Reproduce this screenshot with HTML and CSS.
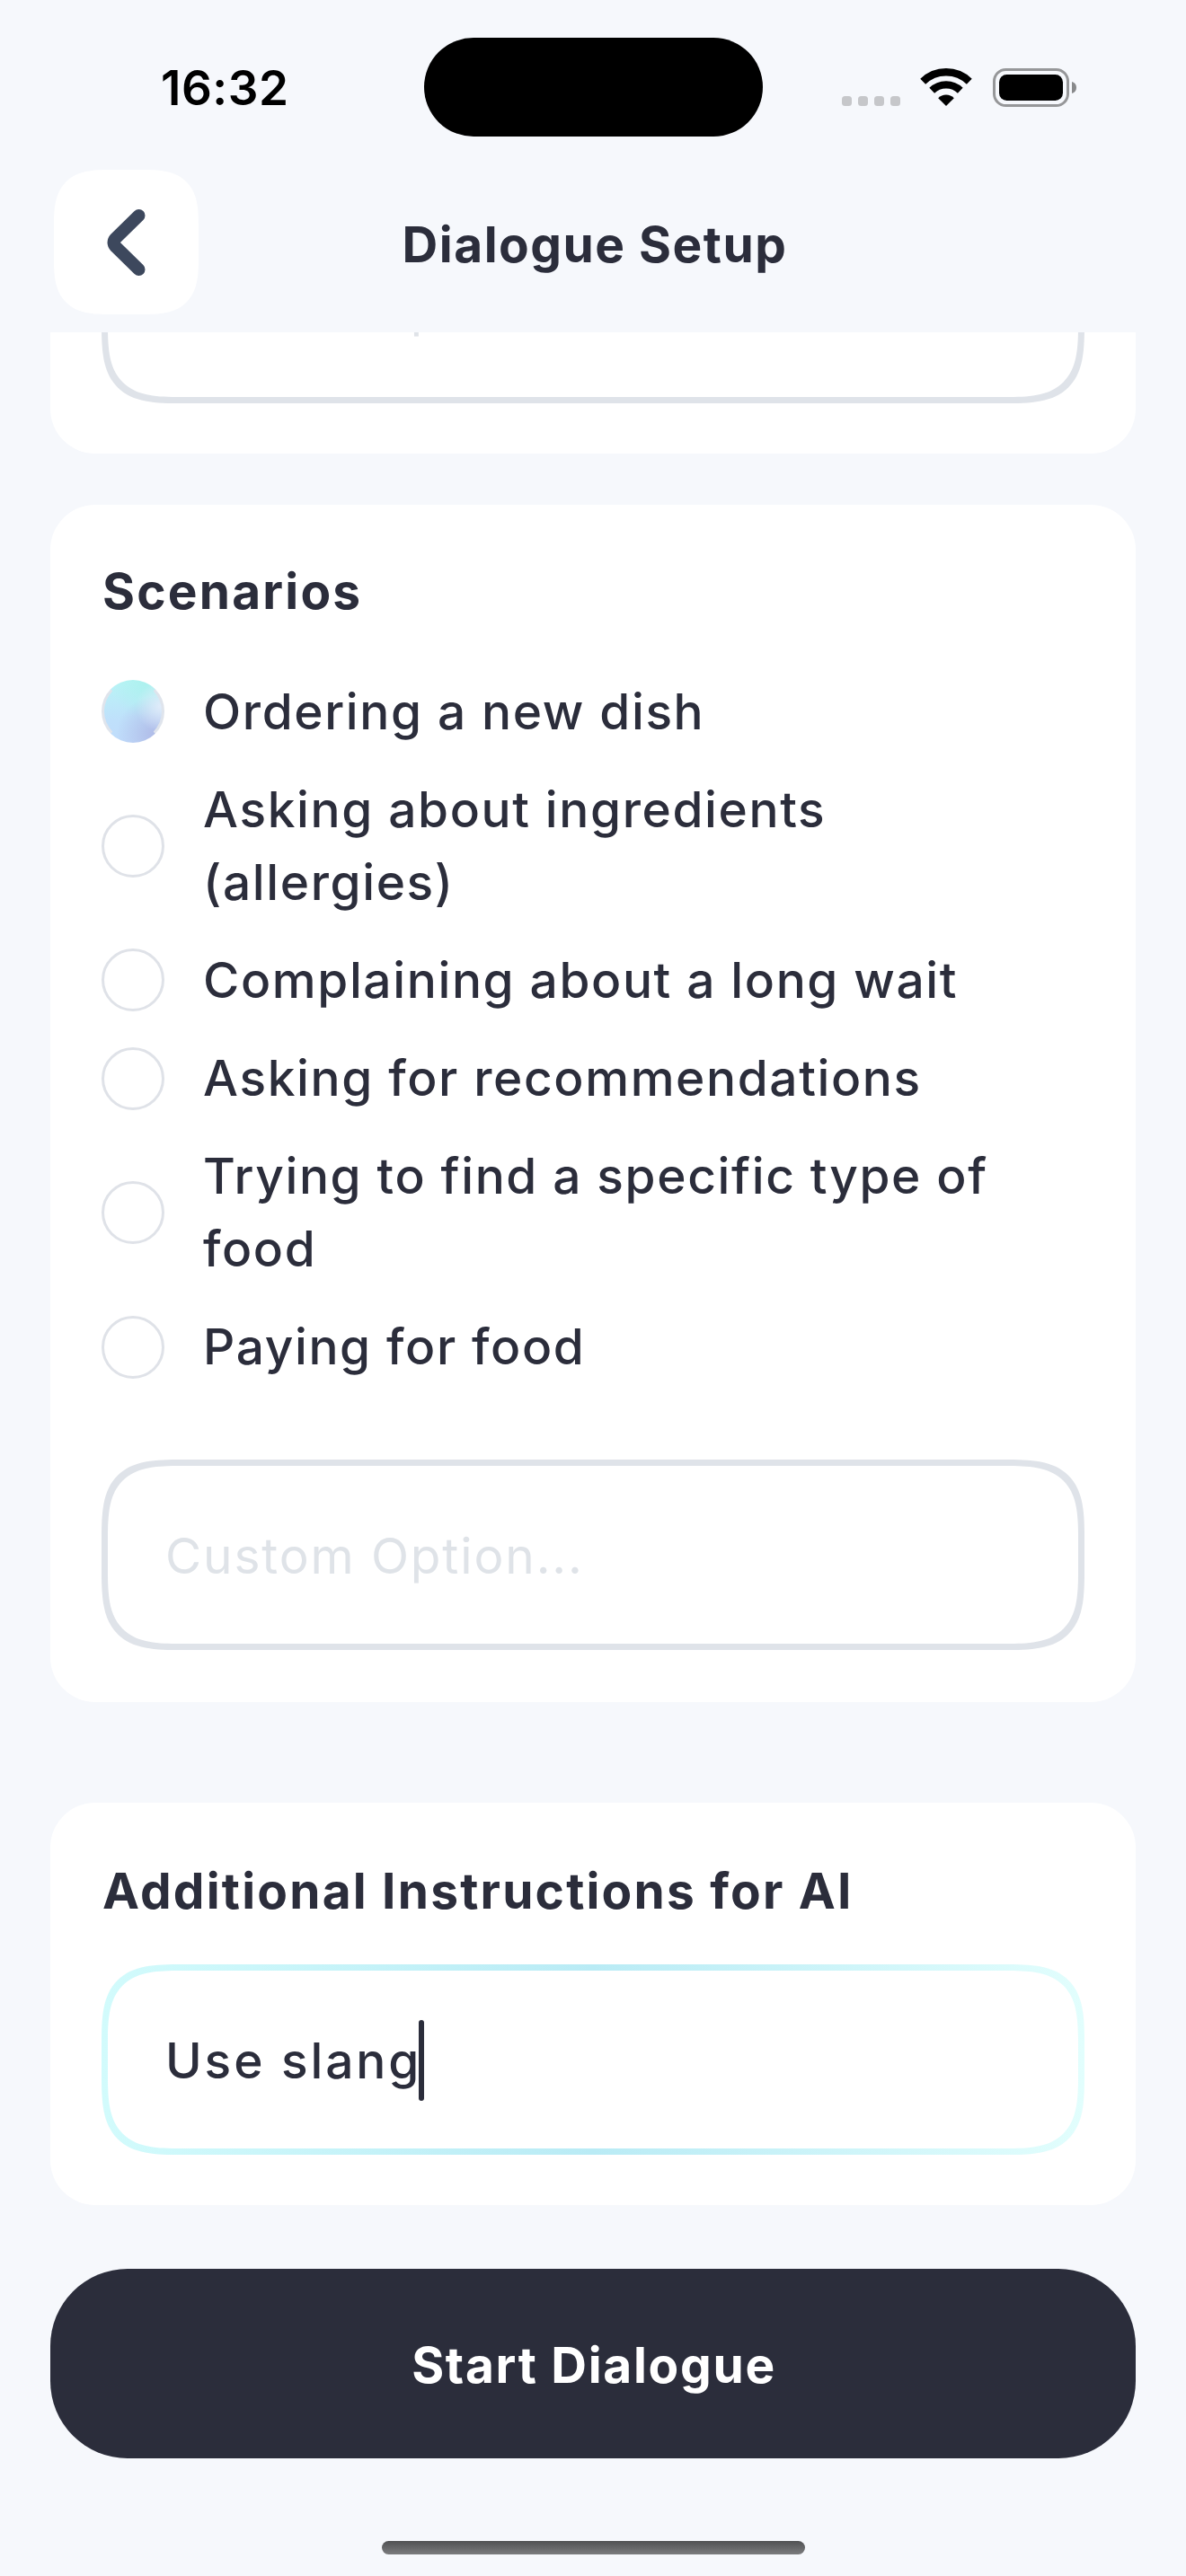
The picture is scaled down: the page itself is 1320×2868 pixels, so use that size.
FILE: index.html
```
<!DOCTYPE html>
<html lang="en">
<head>
<meta charset="utf-8">
<title>Dialogue Setup</title>
<link rel="stylesheet" href="styles.css">
</head>
<body>
<div class="screen">
  <div class="status-bar">
    <span class="status-time">16:32</span>
    <div class="island"></div>
    <div class="status-icons">
      <svg class="signal" width="66" height="43" viewBox="0 0 66 43" fill="#c6c7ca">
        <rect x="0" y="31" width="11" height="11" rx="3.5"/>
        <rect x="18" y="31" width="11" height="11" rx="3.5"/>
        <rect x="36" y="31" width="11" height="11" rx="3.5"/>
        <rect x="54" y="31" width="11" height="11" rx="3.5"/>
      </svg>
      <svg class="wifi" width="58" height="43" viewBox="0 0 58 43">
        <path d="M3.2 14.8 A37 37 0 0 1 54.8 14.8" fill="none" stroke="#000" stroke-width="8.4"/>
        <path d="M13.2 24.8 A22.6 22.6 0 0 1 44.8 24.8" fill="none" stroke="#000" stroke-width="8.2"/>
        <path d="M29 42 L20.2 33.2 A12.4 12.4 0 0 1 37.8 33.2 Z"/>
      </svg>
      <svg class="battery" width="94" height="43" viewBox="0 0 94 43">
        <rect x="1.5" y="1.5" width="82" height="40" rx="13" fill="none" stroke="#969799" stroke-width="3"/>
        <rect x="7" y="7" width="71" height="29" rx="8.5"/>
        <path d="M88 15 C91.5 16 93 18.5 93 21.5 C93 24.500 91.500 27 88 28 Z" fill="#88898b"/>
      </svg>
    </div>
  </div>

  <header class="header">
    <button class="back" aria-label="Back">
      <svg width="44" height="76" viewBox="0 0 44 76">
        <path d="M35.500 8 L9.500 33.500 Q5.500 38 9.500 42.500 L35.500 68" fill="none" stroke="#3d485d" stroke-width="14" stroke-linecap="round" stroke-linejoin="round"/>
      </svg>
    </button>
    <h1 class="title">Dialogue Setup</h1>
  </header>

  <main class="content">
    <section class="card card-clipped">
      <div class="field"><span class="placeholder">Custom Option...</span></div>
    </section>

    <section class="card card-scenarios">
      <h2 class="card-title">Scenarios</h2>
      <ul class="options">
        <li class="option"><span class="radio radio-on"></span><span class="label">Ordering a new dish</span></li>
        <li class="option"><span class="radio"></span><span class="label">Asking about ingredients (allergies)</span></li>
        <li class="option"><span class="radio"></span><span class="label">Complaining about a long wait</span></li>
        <li class="option"><span class="radio"></span><span class="label">Asking for recommendations</span></li>
        <li class="option"><span class="radio"></span><span class="label">Trying to find a specific type of food</span></li>
        <li class="option"><span class="radio"></span><span class="label">Paying for food</span></li>
      </ul>
      <div class="field"><span class="placeholder">Custom Option...</span></div>
    </section>

    <section class="card card-instructions">
      <h2 class="card-title">Additional Instructions for AI</h2>
      <div class="field field-active"><span class="value">Use slang</span><span class="caret"></span></div>
    </section>
  </main>

  <footer class="footer">
    <button class="start">Start Dialogue</button>
    <div class="home-indicator"></div>
  </footer>
</div>
</body>
</html>
```
FILE: styles.css
```
* {
  box-sizing: border-box;
}

body {
  margin: 0;
  background: #f6f8fc;
  color: #2b2d3b;
  font-family: Inter, "Liberation Sans", sans-serif;
}

h1, h2, ul {
  margin: 0;
  padding: 0;
}

button {
  border: 0;
  padding: 0;
  font-family: inherit;
}

.screen {
  display: flex;
  flex-direction: column;
  width: 1320px;
  height: 2868px;
  overflow: hidden;
}

.status-bar {
  display: grid;
  grid-template-columns: 472px 377px 1fr;
  align-items: center;
  height: 189px;
  padding: 42px 0 37px;
}

.status-time {
  padding: 2px 0 0 179px;
  color: #000;
  font-size: 53px;
  font-weight: 600;
  line-height: 60px;
  letter-spacing: 0.5px;
}

.island {
  height: 110px;
  border-radius: 55px;
  background: #000;
}

.status-icons {
  display: flex;
  padding-left: 88px;
}

.wifi {
  margin-left: 21px;
}

.battery {
  margin-left: 23px;
}

.header {
  display: grid;
  grid-template-columns: 161px 1fr 161px;
  align-items: center;
  height: 181px;
  padding: 0 60px 20px;
}

.back {
  display: flex;
  align-items: center;
  justify-content: center;
  height: 161px;
  border-radius: 44px;
  background: #fff;
}

.title {
  padding: 4px 0 0 4px;
  font-size: 55px;
  font-weight: 680;
  line-height: 80px;
  letter-spacing: 1.5px;
  text-align: center;
}

.content {
  display: flex;
  flex-direction: column;
  height: 2085px;
  padding: 0 56px;
  overflow: hidden;
}

.card {
  flex: none;
  padding: 56px 57px;
  border-radius: 50px;
  background: #fff;
}

.card-clipped {
  display: flex;
  flex-direction: column;
  justify-content: flex-end;
  height: 135px;
  margin-bottom: 57px;
  border-radius: 0 0 50px 50px;
  overflow: hidden;
}

.card-scenarios {
  height: 1332.5px;
  margin-bottom: 112px;
}

.card-instructions {
  height: 448.5px;
  padding-top: 58px;
}

.card-title {
  padding-left: 1px;
  font-size: 55px;
  font-weight: 680;
  line-height: 80px;
  letter-spacing: 2.2px;
}

.options {
  display: flex;
  flex-direction: column;
  gap: 28.2px;
  margin: 53.5px 0 85px;
  padding-right: 56px;
  list-style: none;
}

.option {
  display: flex;
  align-items: center;
  gap: 43px;
}

.radio {
  flex: none;
  width: 70px;
  height: 70px;
  border: 3px solid #dfe2e8;
  border-radius: 50%;
}

.radio-on {
  border-color: transparent #dfe4ec;
  background:
    radial-gradient(circle at 94% 42%, rgba(226, 236, 250, 0.95), rgba(214, 226, 246, 0) 36%),
    radial-gradient(circle at 84% 86%, #b0bce8, rgba(176, 188, 232, 0) 50%),
    radial-gradient(circle at 72% 4%, #acf1ee, rgba(172, 241, 238, 0) 48%),
    linear-gradient(180deg, #b9f5f6, #bfe0fb 65%, #c0dcfb);
  background-origin: border-box;
}

.label {
  font-size: 55px;
  font-weight: 500;
  line-height: 81px;
  letter-spacing: 1.62px;
}

.field {
  display: flex;
  flex: none;
  align-items: center;
  height: 212px;
  padding: 2px 64px 0;
  border: 7px solid #dfe3e9;
  border-radius: 60px;
  background: #fff;
  font-size: 55px;
  line-height: 80px;
}

.field-active {
  margin-top: 42.5px;
  border-color: transparent;
  background:
    linear-gradient(#fff, #fff) padding-box,
    linear-gradient(90deg, #d2fbfc, #b9ebf5 50%, #e2fefd) border-box;
}

.placeholder {
  color: #dfe3e8;
  letter-spacing: 1.87px;
}

.value {
  font-weight: 500;
  letter-spacing: 2.9px;
}

.caret {
  width: 6px;
  height: 90px;
  margin-left: -3px;
  border-radius: 3px;
  background: #2b2d3b;
}

/* Continuous corners where the browser can draw them */
@supports (corner-shape: superellipse(1.7)) {
  .field {
    border-radius: 90px;
    corner-shape: superellipse(1.65);
  }

  .back {
    border-radius: 62px;
    corner-shape: superellipse(1.5);
  }
}

.footer {
  display: flex;
  flex-direction: column;
  align-items: center;
  padding: 71px 56px 0;
}

.start {
  width: 100%;
  height: 211px;
  padding: 3px 0 0 2px;
  border-radius: 86px;
  background: #2b2d3b;
  color: #fff;
  font-size: 55px;
  font-weight: 680;
  letter-spacing: 1.7px;
}

.home-indicator {
  width: 471px;
  height: 15px;
  margin-top: 92px;
  border-radius: 7.5px;
  background: linear-gradient(#505153, #7b7c7e);
}
```
